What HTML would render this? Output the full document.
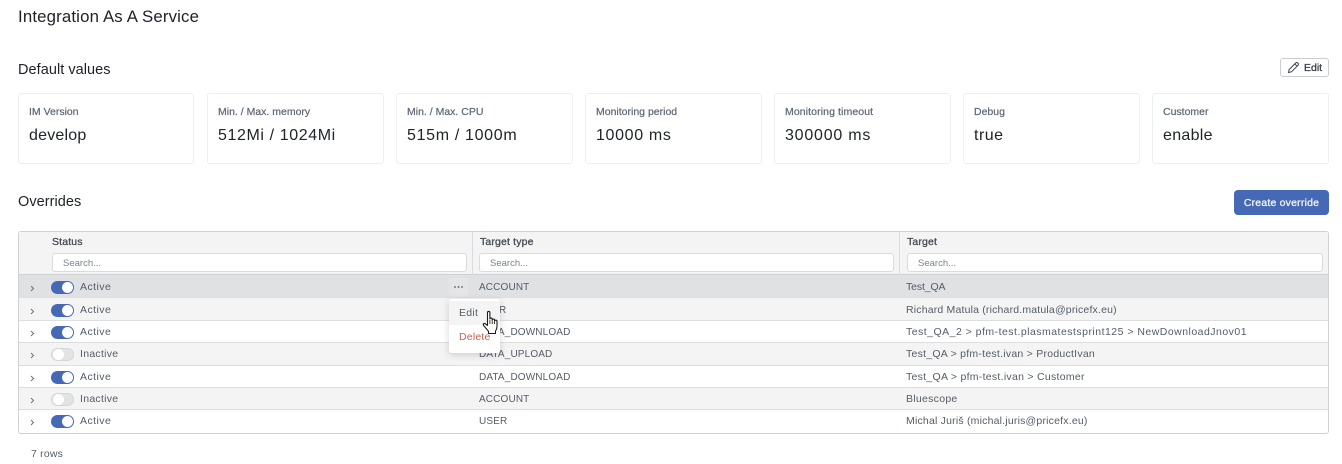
<!DOCTYPE html>
<html><head><meta charset="utf-8">
<style>
html,body{margin:0;padding:0;background:#fff;width:1342px;height:464px;overflow:hidden;font-family:"Liberation Sans",sans-serif;color:#22262c}
.a{position:absolute;white-space:nowrap}
.card{position:absolute;top:93px;height:69px;border:1px solid #eceef0;border-radius:3px;box-sizing:content-box;background:#fff}
.card .l{position:absolute;left:10px;top:12px;font-size:10.5px;color:#5c6672;line-height:13px;white-space:nowrap;-webkit-text-stroke:.2px #5c6672}
.card .v{position:absolute;left:10px;top:32px;font-size:16px;line-height:19px;color:#20242a;white-space:nowrap}
.row{position:absolute;left:19px;width:1309px;box-sizing:border-box;border-bottom:1px solid #dcdee0}
.t{position:absolute;font-size:10.5px;line-height:13px;color:#555c66;white-space:nowrap;letter-spacing:.28px}
.u{font-size:10px;letter-spacing:.14px}
.sw{position:absolute;left:51px;width:23px;height:13px;border-radius:7px;background:#4569b5}
.sw i{position:absolute;left:11px;top:1px;width:11px;height:11px;border-radius:50%;background:#fff}
.sw.off{background:#e2e3e5;box-shadow:inset 0 0 0 1px #d4d6d9}
.sw.off i{left:2px}
.inp{position:absolute;top:253px;height:17px;border:1px solid #d9dbde;border-radius:3px;background:#fff;font-size:9.5px;color:#7b828b;line-height:19px;padding-left:10px;box-sizing:content-box}
.h{position:absolute;top:236px;font-size:10.5px;color:#454b54;line-height:13px;letter-spacing:.15px;-webkit-text-stroke:.3px #454b54}
.ch{position:absolute;left:29px}
</style></head><body>
<div class="a" style="left:18px;top:7px;font-size:16.8px;line-height:19px;color:#1d2127;letter-spacing:.16px">Integration As A Service</div>
<div class="a" style="left:18px;top:62px;font-size:14.5px;line-height:17px;color:#1d2127;letter-spacing:.05px">Default values</div>

<div class="a" style="left:1280px;top:58px;width:47px;height:17px;border:1px solid #c9ccd0;border-radius:3px;background:#fff"></div>
<svg class="a" style="left:1287px;top:61px" width="13" height="13" viewBox="0 0 13 13" fill="none" stroke="#3a4049" stroke-width="1"><path d="M1.5 11.5l.7-3 6.6-6.6a1.2 1.2 0 0 1 1.7 0l.6.6a1.2 1.2 0 0 1 0 1.7L4.500 10.800z M7.800 2.900l2.300 2.300"/></svg>
<div class="a" style="left:1304px;top:62px;font-size:10.5px;line-height:13px;color:#3a4049;-webkit-text-stroke:.3px #3a4049">Edit</div>

<div class="card" style="left:18px;width:174px"><div class="l">IM Version</div><div class="v" style="letter-spacing:.2px">develop</div></div>
<div class="card" style="left:207px;width:175px"><div class="l">Min. / Max. memory</div><div class="v" style="letter-spacing:.6px">512Mi / 1024Mi</div></div>
<div class="card" style="left:396px;width:175px"><div class="l">Min. / Max. CPU</div><div class="v" style="letter-spacing:.67px">515m / 1000m</div></div>
<div class="card" style="left:585px;width:175px"><div class="l">Monitoring period</div><div class="v" style="letter-spacing:.65px">10000 ms</div></div>
<div class="card" style="left:774px;width:175px"><div class="l" style="letter-spacing:.1px">Monitoring timeout</div><div class="v" style="letter-spacing:.78px">300000 ms</div></div>
<div class="card" style="left:963px;width:175px"><div class="l">Debug</div><div class="v" style="letter-spacing:.5px">true</div></div>
<div class="card" style="left:1152px;width:175px"><div class="l">Customer</div><div class="v" style="letter-spacing:.3px">enable</div></div>

<div class="a" style="left:18px;top:194px;font-size:14.5px;line-height:17px;color:#1d2127;letter-spacing:.05px">Overrides</div>
<div class="a" style="left:1234px;top:190px;width:95px;height:25px;border-radius:4px;background:#4569b5;color:#f1f4fa;font-size:10.5px;line-height:26px;text-align:center;letter-spacing:.2px;-webkit-text-stroke:.3px #f1f4fa">Create override</div>

<!-- table -->
<div class="a" style="left:18px;top:231px;width:1309px;height:201px;border:1px solid #cfd1d4;border-radius:3px;background:#fff"></div>
<div class="a" style="left:19px;top:232px;width:1309px;height:43px;background:#f4f4f5;border-bottom:1px solid #cfd1d4;box-sizing:border-box"></div>
<div class="a" style="left:472px;top:232px;width:1px;height:43px;background:#d9dbde"></div>
<div class="a" style="left:899px;top:232px;width:1px;height:43px;background:#d9dbde"></div>
<div class="h" style="left:52px">Status</div>
<div class="h" style="left:480px">Target type</div>
<div class="h" style="left:907px">Target</div>
<div class="inp" style="left:52px;width:403px">Search...</div>
<div class="inp" style="left:479px;width:403px">Search...</div>
<div class="inp" style="left:907px;width:404px">Search...</div>

<div class="row" style="top:275px;height:23px;background:#e0e1e3"></div>
<div class="row" style="top:298px;height:23px;background:#f4f4f5"></div>
<div class="row" style="top:321px;height:22px;background:#fff"></div>
<div class="row" style="top:343px;height:23px;background:#f4f4f5"></div>
<div class="row" style="top:366px;height:22px;background:#fff"></div>
<div class="row" style="top:388px;height:22px;background:#f4f4f5"></div>
<div class="row" style="top:410px;height:22px;background:#fff;border-bottom:none"></div>

<svg class="ch" style="top:284px" width="7" height="9" viewBox="0 0 7 9" fill="none" stroke="#6a7280" stroke-width="1"><path d="M2 2l2.500 2.500L2 7"/></svg>
<svg class="ch" style="top:307px" width="7" height="9" viewBox="0 0 7 9" fill="none" stroke="#6a7280" stroke-width="1"><path d="M2 2l2.500 2.500L2 7"/></svg>
<svg class="ch" style="top:329px" width="7" height="9" viewBox="0 0 7 9" fill="none" stroke="#6a7280" stroke-width="1"><path d="M2 2l2.500 2.500L2 7"/></svg>
<svg class="ch" style="top:351px" width="7" height="9" viewBox="0 0 7 9" fill="none" stroke="#6a7280" stroke-width="1"><path d="M2 2l2.500 2.500L2 7"/></svg>
<svg class="ch" style="top:374px" width="7" height="9" viewBox="0 0 7 9" fill="none" stroke="#6a7280" stroke-width="1"><path d="M2 2l2.500 2.500L2 7"/></svg>
<svg class="ch" style="top:396px" width="7" height="9" viewBox="0 0 7 9" fill="none" stroke="#6a7280" stroke-width="1"><path d="M2 2l2.500 2.500L2 7"/></svg>
<svg class="ch" style="top:418px" width="7" height="9" viewBox="0 0 7 9" fill="none" stroke="#6a7280" stroke-width="1"><path d="M2 2l2.500 2.500L2 7"/></svg>

<div class="sw" style="top:281px"><i></i></div><div class="t" style="left:80px;top:281px;letter-spacing:.45px">Active</div>
<div class="sw" style="top:304px"><i></i></div><div class="t" style="left:80px;top:304px;letter-spacing:.45px">Active</div>
<div class="sw" style="top:326px"><i></i></div><div class="t" style="left:80px;top:326px;letter-spacing:.45px">Active</div>
<div class="sw off" style="top:348px"><i></i></div><div class="t" style="left:80px;top:348px">Inactive</div>
<div class="sw" style="top:371px"><i></i></div><div class="t" style="left:80px;top:371px;letter-spacing:.45px">Active</div>
<div class="sw off" style="top:393px"><i></i></div><div class="t" style="left:80px;top:393px">Inactive</div>
<div class="sw" style="top:415px"><i></i></div><div class="t" style="left:80px;top:415px;letter-spacing:.45px">Active</div>

<div class="t u" style="left:479px;top:281px">ACCOUNT</div>
<div class="t u" style="left:499px;top:304px">R</div>
<div class="t u" style="left:479px;top:326px">DATA_DOWNLOAD</div>
<div class="t u" style="left:479px;top:348px">DATA_UPLOAD</div>
<div class="t u" style="left:479px;top:371px">DATA_DOWNLOAD</div>
<div class="t u" style="left:479px;top:393px">ACCOUNT</div>
<div class="t u" style="left:479px;top:415px">USER</div>

<div class="t" style="left:906px;top:281px;letter-spacing:-.12px">Test_QA</div>
<div class="t" style="left:906px;top:304px;letter-spacing:.18px">Richard Matula (richard.matula@pricefx.eu)</div>
<div class="t" style="left:906px;top:326px;letter-spacing:.48px">Test_QA_2 &gt; pfm-test.plasmatestsprint125 &gt; NewDownloadJnov01</div>
<div class="t" style="left:906px;top:348px;letter-spacing:.25px">Test_QA &gt; pfm-test.ivan &gt; ProductIvan</div>
<div class="t" style="left:906px;top:371px">Test_QA &gt; pfm-test.ivan &gt; Customer</div>
<div class="t" style="left:906px;top:393px">Bluescope</div>
<div class="t" style="left:906px;top:415px;letter-spacing:.2px">Michal Juriš (michal.juris@pricefx.eu)</div>

<!-- dots button -->
<div class="a" style="left:449px;top:278px;width:19px;height:19px;border-radius:3px;background:#e4e5e7"></div>
<svg class="a" style="left:453px;top:285px" width="11" height="4" viewBox="0 0 11 4" fill="#555c66"><circle cx="2" cy="2" r=".9"/><circle cx="5.500" cy="2" r=".9"/><circle cx="9" cy="2" r=".9"/></svg>

<!-- menu -->
<div class="a" style="left:449px;top:299px;width:51px;height:54px;background:#fff;border-radius:3px;box-shadow:0 2px 8px rgba(0,0,0,.16)"></div>
<div class="a" style="left:449px;top:301px;width:51px;height:24px;background:#f4f4f5"></div>
<div class="t" style="left:459px;top:307px;color:#555c66">Edit</div>
<div class="t" style="left:459px;top:331px;color:#c9604f;letter-spacing:.2px">Delete</div>

<!-- cursor -->
<svg class="a" style="left:482px;top:310px" width="20" height="26" viewBox="0 0 20 26"><path d="M5.500 2.500c0-1.400 2.400-1.400 2.400 0V9c0-1.200 2.300-1.200 2.300 0v1c0-1.200 2.400-1.200 2.400 0v1c0-1.100 2.400-1.100 2.400.2v5.300c0 2.300-.7 3.300-1.500 4.600v2.400H6.500v-2.200L1.600 15.500c-1-1.400.7-2.800 1.900-1.500l2 1.400z" fill="#fff" stroke="#1c1c1c" stroke-width="1.100" stroke-linejoin="round"/><path d="M7.900 10v4M10.200 10v4M12.600 11v3" stroke="#1c1c1c" stroke-width=".8"/></svg>

<div class="a" style="left:31px;top:448px;font-size:10.5px;line-height:13px;color:#555c66;letter-spacing:.2px">7 rows</div>
</body></html>
